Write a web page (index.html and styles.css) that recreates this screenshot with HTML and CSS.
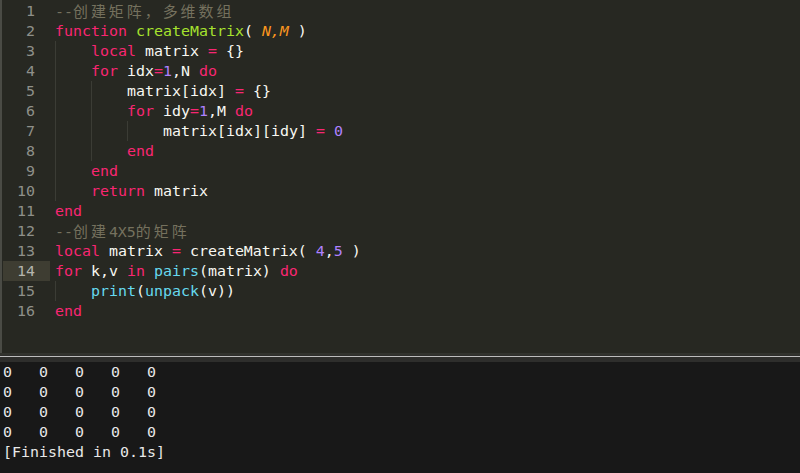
FILE: index.html
```html
<!DOCTYPE html>
<html lang="en">
<head>
    <meta charset="UTF-8">
    <title>matrix.lua</title>
    <link rel="stylesheet" href="styles.css">
</head>
<body>
    <div class="editor">
        <div class="gutter">
            <div class="num">1</div>
            <div class="num">2</div>
            <div class="num">3</div>
            <div class="num">4</div>
            <div class="num">5</div>
            <div class="num">6</div>
            <div class="num">7</div>
            <div class="num">8</div>
            <div class="num">9</div>
            <div class="num">10</div>
            <div class="num">11</div>
            <div class="num">12</div>
            <div class="num">13</div>
            <div class="num current">14</div>
            <div class="num">15</div>
            <div class="num">16</div>
        </div>
        <div class="code">
            <div class="line"><span class="cm">--<span class="cjk">创建矩阵，多维数组</span></span></div>
            <div class="line"><span class="kw">function</span> <span class="fn">createMatrix</span>( <span class="param">N,M</span> )</div>
            <div class="line"><span class="ind"></span><span class="kw">local</span> matrix <span class="kw">=</span> {}</div>
            <div class="line"><span class="ind"></span><span class="kw">for</span> idx<span class="kw">=</span><span class="nu">1</span>,N <span class="kw">do</span></div>
            <div class="line"><span class="ind"></span><span class="ind"></span>matrix[idx] <span class="kw">=</span> {}</div>
            <div class="line"><span class="ind"></span><span class="ind"></span><span class="kw">for</span> idy<span class="kw">=</span><span class="nu">1</span>,M <span class="kw">do</span></div>
            <div class="line"><span class="ind"></span><span class="ind"></span><span class="ind"></span>matrix[idx][idy] <span class="kw">=</span> <span class="nu">0</span></div>
            <div class="line"><span class="ind"></span><span class="ind"></span><span class="kw">end</span></div>
            <div class="line"><span class="ind"></span><span class="kw">end</span></div>
            <div class="line"><span class="ind"></span><span class="kw">return</span> matrix</div>
            <div class="line"><span class="kw">end</span></div>
            <div class="line"><span class="cm">--<span class="cjk">创建</span>4X5<span class="cjk">的矩阵</span></span></div>
            <div class="line"><span class="kw">local</span> matrix <span class="kw">=</span> createMatrix( <span class="nu">4</span>,<span class="nu">5</span> )</div>
            <div class="line"><span class="kw">for</span> k,v <span class="kw">in</span> <span class="bi">pairs</span>(matrix) <span class="kw">do</span></div>
            <div class="line"><span class="ind"></span><span class="bi">print</span>(<span class="bi">unpack</span>(v))</div>
            <div class="line"><span class="kw">end</span></div>
        </div>
    </div>
    <div class="splitter"></div>
    <div class="output">
        <div class="line">0   0   0   0   0</div>
        <div class="line">0   0   0   0   0</div>
        <div class="line">0   0   0   0   0</div>
        <div class="line">0   0   0   0   0</div>
        <div class="line">[Finished in 0.1s]</div>
    </div>
</body>
</html>
```

FILE: styles.css
```css
body {
    margin: 0;
    background: #181818;
    font-family: "DejaVu Sans Mono", "Noto Sans CJK SC", monospace;
    font-size: 14.95px;
    overflow: hidden;
}
.editor {
    display: flex;
    height: 353px;
    background: #272822;
    border-left: 2px solid #4a4b45;
    box-sizing: border-box;
    padding-top: 1px;
}
.gutter {
    width: 48px;
    flex: none;
}
.num {
    height: 20px;
    line-height: 20px;
    text-align: right;
    padding-right: 15px;
    color: #8f908a;
    margin-left: 1px;
}
.num.current {
    background: #3e3d32;
    color: #b5b5ae;
}
.code {
    padding-left: 5px;
    color: #f8f8f2;
}
.line {
    height: 20px;
    line-height: 20px;
    white-space: pre;
}
.cjk {
    font-family: "Noto Sans CJK SC", sans-serif;
    letter-spacing: 3px;
}
.ind {
    display: inline-block;
    width: 36px;
    height: 20px;
    vertical-align: top;
    border-left: 1px solid #3b3c35;
    box-sizing: border-box;
}
.cm {
    color: #75715e;
}
.kw {
    color: #f92672;
}
.fn {
    color: #a6e22e;
}
.param {
    color: #fd971f;
    font-style: italic;
}
.nu {
    color: #ae81ff;
}
.bi {
    color: #66d9ef;
}
.splitter {
    height: 7px;
    background: #2e2e2c;
    border-top: 2px solid #32332e;
}
.splitter::after {
    content: "";
    display: block;
    height: 1px;
    margin-top: 1px;
    background: #bdbdbd;
}
.output {
    color: #e8e8e8;
    padding-left: 3px;
}
```
